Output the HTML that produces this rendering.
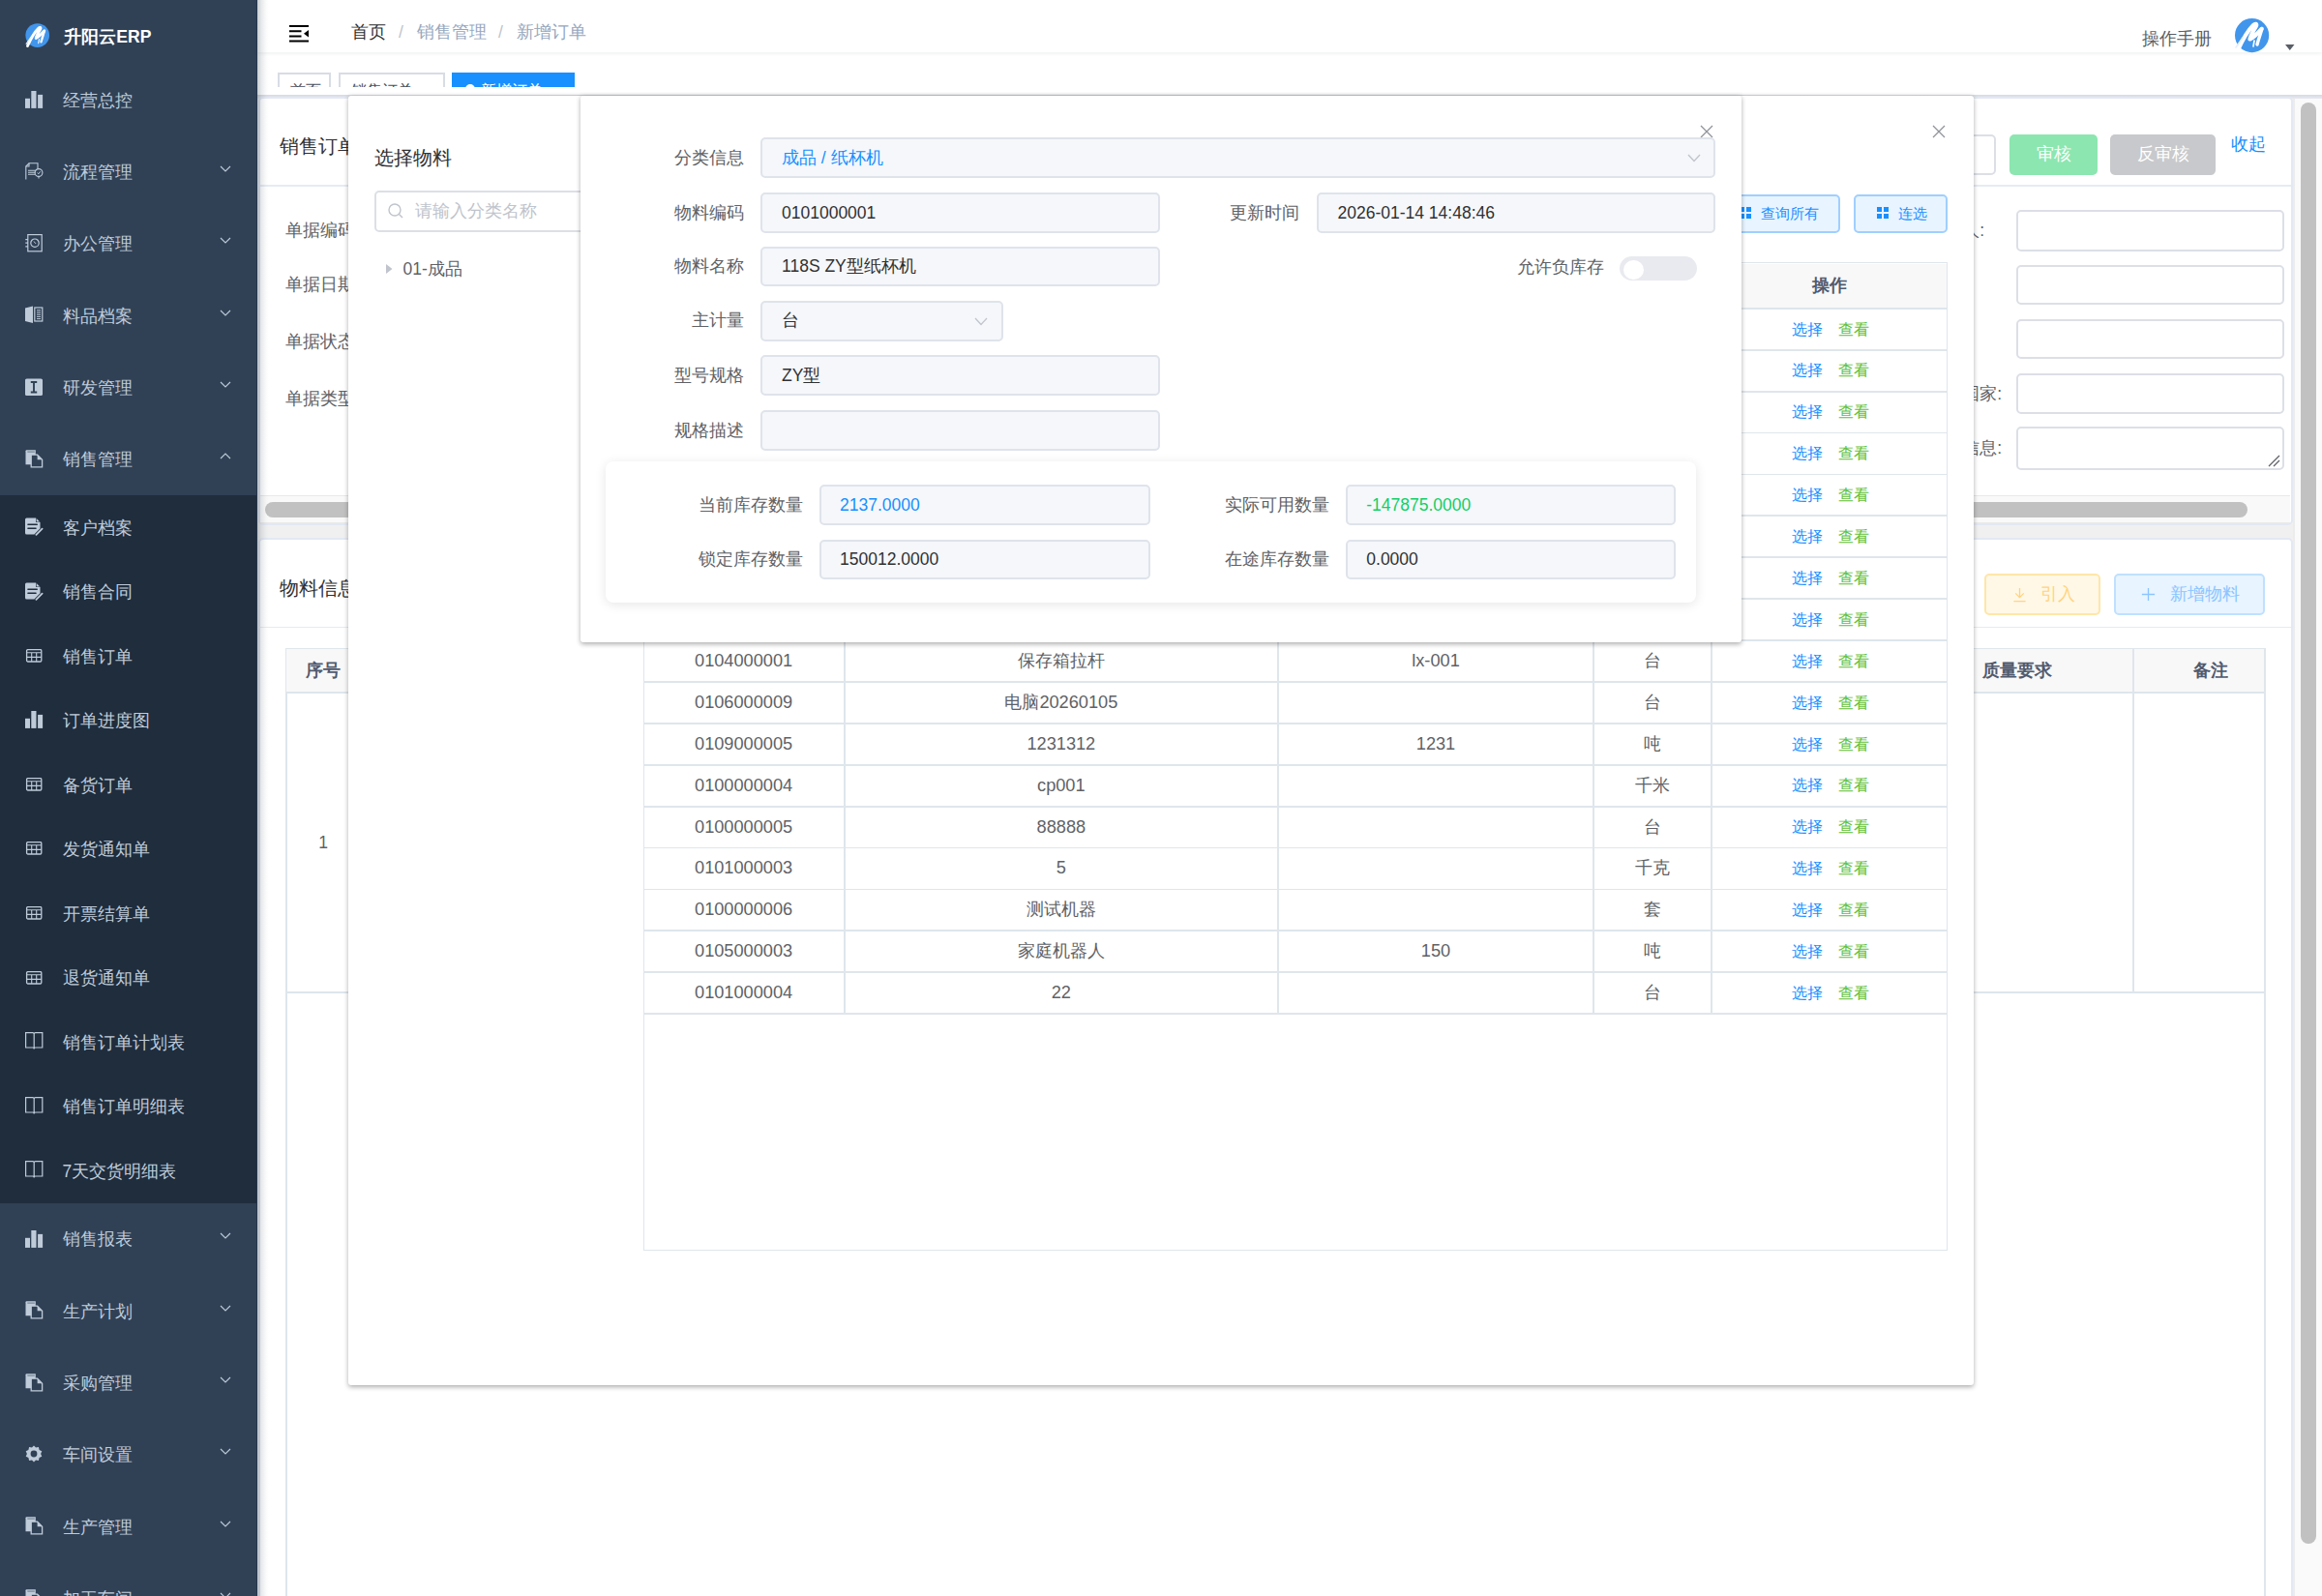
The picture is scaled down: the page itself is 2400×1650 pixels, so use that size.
<!DOCTYPE html>
<html><head><meta charset="utf-8"><style>
html,body{margin:0;padding:0;width:2400px;height:1650px;overflow:hidden;background:#fff;}
body{position:relative;font-family:"Liberation Sans",sans-serif;}
.r{position:absolute;}
.t{position:absolute;white-space:nowrap;}
</style></head><body>
<div class="r" style="left:0px;top:0px;width:266px;height:1650px;background:#304156;"></div>
<div class="r" style="left:0px;top:512px;width:266px;height:732px;background:#1f2d3d;"></div>
<svg class="r" style="left:24.5px;top:22.5px" width="28" height="28" viewBox="0 0 40 40"><circle cx="19.6" cy="19.4" r="17.6" fill="#4196ec"/><path d="M5 35 C9 26 14 16 21 9 C23 7 25 7.5 24 10 C21 15 18 20 17.5 23.5 C21 22 25 18 29.5 13" stroke="#fff" stroke-width="4.2" fill="none" stroke-linecap="round" stroke-linejoin="round"/><path d="M30 12.5 C28.5 18 26.5 23 25 29" stroke="#fff" stroke-width="3.4" fill="none" stroke-linecap="round"/><path d="M3 32 L10 22" stroke="#e3efff" stroke-width="1.6" stroke-linecap="round"/><path d="M22 25 L21 31" stroke="#fff" stroke-width="1.6" stroke-linecap="round"/></svg>
<div class="t" style="left:66.3px;top:25.98px;height:24.64px;line-height:24.64px;font-size:17.6px;color:#ffffff;font-weight:600;">升阳云ERP</div>
<svg class="r" style="left:25.9px;top:94.0px" width="19" height="19" viewBox="0 0 19 19" fill="#bfcbd9"><rect x="0" y="7.8" width="5" height="10.1"/><rect x="6.3" y="0" width="5.2" height="17.9"/><rect x="13.1" y="3.9" width="5" height="14"/></svg>
<div class="t" style="left:64.6px;top:91.8px;height:24.5px;line-height:24.5px;font-size:17.5px;color:#bfcbd9;font-weight:normal;">经营总控</div>
<svg class="r" style="left:26px;top:167.75px" width="19" height="19" viewBox="0 0 19 19" fill="#bfcbd9"><path d="M0.8 17.5 V4 L4 0.8 H13 V6.5" fill="none" stroke="#bfcbd9" stroke-width="1.1"/><path d="M4 0.8 V4 H0.8" fill="none" stroke="#bfcbd9" stroke-width="1.1"/><path d="M3 8.2 H10.5 M3 10.2 H10.5 M3 12.2 H10" stroke="#bfcbd9" stroke-width="1.1"/><circle cx="14" cy="10.5" r="3.9" fill="none" stroke="#bfcbd9" stroke-width="1.1"/><path d="M12.6 10.6 L13.8 11.8 L15.6 9.4" fill="none" stroke="#bfcbd9" stroke-width="1"/><path d="M14 14.4 V16.5" stroke="#bfcbd9" stroke-width="1.1"/></svg>
<div class="t" style="left:64.6px;top:166.1px;height:24.5px;line-height:24.5px;font-size:17.5px;color:#bfcbd9;font-weight:normal;">流程管理</div>
<svg class="r" style="left:227px;top:171.15px" width="12" height="8" viewBox="0 0 12 8"><path d="M1 1 L6 6 L11 1" fill="none" stroke="#bfcbd9" stroke-width="1.1"/></svg>
<svg class="r" style="left:26px;top:242.05px" width="19" height="19" viewBox="0 0 19 19" fill="#bfcbd9"><rect x="2.8" y="0.6" width="14.4" height="17.2" fill="none" stroke="#bfcbd9" stroke-width="1.2"/><circle cx="10" cy="9.2" r="4.2" fill="none" stroke="#bfcbd9" stroke-width="1.2"/><path d="M9 7.5 L10.6 9.6 H11.2" fill="none" stroke="#bfcbd9" stroke-width="1"/><path d="M0.3 5.6 H3 M0.3 9.2 H3 M0.3 12.8 H3" stroke="#bfcbd9" stroke-width="1.2"/></svg>
<div class="t" style="left:64.6px;top:240.4px;height:24.5px;line-height:24.5px;font-size:17.5px;color:#bfcbd9;font-weight:normal;">办公管理</div>
<svg class="r" style="left:227px;top:245.45px" width="12" height="8" viewBox="0 0 12 8"><path d="M1 1 L6 6 L11 1" fill="none" stroke="#bfcbd9" stroke-width="1.1"/></svg>
<svg class="r" style="left:26px;top:316.35px" width="19" height="19" viewBox="0 0 19 19" fill="#bfcbd9"><path d="M0 2.5 L8 0.5 V18 L0 16 Z"/><rect x="9.8" y="2" width="8" height="14" fill="none" stroke="#bfcbd9" stroke-width="1.2"/><path d="M12 4.8 H16 M12 7 H16 M12 9.2 H16 M12 11.4 H16 M12 13.6 H16" stroke="#bfcbd9" stroke-width="1"/></svg>
<div class="t" style="left:64.6px;top:314.7px;height:24.5px;line-height:24.5px;font-size:17.5px;color:#bfcbd9;font-weight:normal;">料品档案</div>
<svg class="r" style="left:227px;top:319.75px" width="12" height="8" viewBox="0 0 12 8"><path d="M1 1 L6 6 L11 1" fill="none" stroke="#bfcbd9" stroke-width="1.1"/></svg>
<svg class="r" style="left:26px;top:390.65px" width="19" height="19" viewBox="0 0 19 19" fill="#bfcbd9"><rect x="0" y="0.5" width="18" height="17.5" rx="1.6"/><path d="M5.8 4 H12.2 M9 4 V14.5 M5.8 14.5 H12.2" stroke="#304156" stroke-width="1.9"/></svg>
<div class="t" style="left:64.6px;top:389.0px;height:24.5px;line-height:24.5px;font-size:17.5px;color:#bfcbd9;font-weight:normal;">研发管理</div>
<svg class="r" style="left:227px;top:394.05px" width="12" height="8" viewBox="0 0 12 8"><path d="M1 1 L6 6 L11 1" fill="none" stroke="#bfcbd9" stroke-width="1.1"/></svg>
<svg class="r" style="left:26px;top:464.95px" width="19" height="19" viewBox="0 0 19 19" fill="#bfcbd9"><path d="M0.5 1.2 Q0.5 0.2 1.5 0.2 H10.8 V15.2 H0.5 Z"/><rect x="2.3" y="1.5" width="7.5" height="1.2" fill="#304156" opacity=".5"/><path d="M6.2 5.2 H12.6 L17.6 10.2 V17.8 H6.2 Z" fill="#304156" stroke="#bfcbd9" stroke-width="1.3"/><path d="M12.6 5.2 V10.2 H17.6 Z" fill="#bfcbd9"/></svg>
<div class="t" style="left:64.6px;top:463.3px;height:24.5px;line-height:24.5px;font-size:17.5px;color:#bfcbd9;font-weight:normal;">销售管理</div>
<svg class="r" style="left:227px;top:468.35px" width="12" height="8" viewBox="0 0 12 8"><path d="M1 6 L6 1 L11 6" fill="none" stroke="#bfcbd9" stroke-width="1.1"/></svg>
<svg class="r" style="left:26px;top:535.16px" width="19" height="19" viewBox="0 0 19 19" fill="#bfcbd9"><path d="M1.5 0.5 H11 L15.5 5 V11.5 L9.5 17.5 H1.5 Q0 17.5 0 16 V2 Q0 0.5 1.5 0.5 Z"/><path d="M11 0.5 V5 H15.5" fill="#1f2d3d"/><path d="M11.6 1 L15 4.4 H11.6 Z" fill="#bfcbd9"/><path d="M3 7.2 H12.2 M3 11.2 H11" stroke="#1f2d3d" stroke-width="1.6" stroke-linecap="round"/><path d="M10.8 18.6 L18 11.4" stroke="#1f2d3d" stroke-width="3.2"/><path d="M11.4 17.8 L17.6 11.6" stroke="#bfcbd9" stroke-width="1.8" stroke-linecap="round"/></svg>
<div class="t" style="left:64.6px;top:533.51px;height:24.5px;line-height:24.5px;font-size:17.5px;color:#bfcbd9;font-weight:normal;">客户档案</div>
<svg class="r" style="left:26px;top:601.68px" width="19" height="19" viewBox="0 0 19 19" fill="#bfcbd9"><path d="M1.5 0.5 H11 L15.5 5 V11.5 L9.5 17.5 H1.5 Q0 17.5 0 16 V2 Q0 0.5 1.5 0.5 Z"/><path d="M11 0.5 V5 H15.5" fill="#1f2d3d"/><path d="M11.6 1 L15 4.4 H11.6 Z" fill="#bfcbd9"/><path d="M3 7.2 H12.2 M3 11.2 H11" stroke="#1f2d3d" stroke-width="1.6" stroke-linecap="round"/><path d="M10.8 18.6 L18 11.4" stroke="#1f2d3d" stroke-width="3.2"/><path d="M11.4 17.8 L17.6 11.6" stroke="#bfcbd9" stroke-width="1.8" stroke-linecap="round"/></svg>
<div class="t" style="left:64.6px;top:600.03px;height:24.5px;line-height:24.5px;font-size:17.5px;color:#bfcbd9;font-weight:normal;">销售合同</div>
<svg class="r" style="left:26px;top:670.9px" width="19" height="19" viewBox="0 0 19 19" fill="#bfcbd9"><rect x="1.6" y="0.6" width="15.2" height="12.4" rx="1.2" fill="none" stroke="#bfcbd9" stroke-width="1.3"/><path d="M1.6 3.8 H16.8 M1.6 8.4 H16.8 M6.7 3.8 V13 M11.7 3.8 V13" stroke="#bfcbd9" stroke-width="1.1"/></svg>
<div class="t" style="left:64.6px;top:666.55px;height:24.5px;line-height:24.5px;font-size:17.5px;color:#bfcbd9;font-weight:normal;">销售订单</div>
<svg class="r" style="left:25.9px;top:735.27px" width="19" height="19" viewBox="0 0 19 19" fill="#bfcbd9"><rect x="0" y="7.8" width="5" height="10.1"/><rect x="6.3" y="0" width="5.2" height="17.9"/><rect x="13.1" y="3.9" width="5" height="14"/></svg>
<div class="t" style="left:64.6px;top:733.07px;height:24.5px;line-height:24.5px;font-size:17.5px;color:#bfcbd9;font-weight:normal;">订单进度图</div>
<svg class="r" style="left:26px;top:803.94px" width="19" height="19" viewBox="0 0 19 19" fill="#bfcbd9"><rect x="1.6" y="0.6" width="15.2" height="12.4" rx="1.2" fill="none" stroke="#bfcbd9" stroke-width="1.3"/><path d="M1.6 3.8 H16.8 M1.6 8.4 H16.8 M6.7 3.8 V13 M11.7 3.8 V13" stroke="#bfcbd9" stroke-width="1.1"/></svg>
<div class="t" style="left:64.6px;top:799.59px;height:24.5px;line-height:24.5px;font-size:17.5px;color:#bfcbd9;font-weight:normal;">备货订单</div>
<svg class="r" style="left:26px;top:870.46px" width="19" height="19" viewBox="0 0 19 19" fill="#bfcbd9"><rect x="1.6" y="0.6" width="15.2" height="12.4" rx="1.2" fill="none" stroke="#bfcbd9" stroke-width="1.3"/><path d="M1.6 3.8 H16.8 M1.6 8.4 H16.8 M6.7 3.8 V13 M11.7 3.8 V13" stroke="#bfcbd9" stroke-width="1.1"/></svg>
<div class="t" style="left:64.6px;top:866.11px;height:24.5px;line-height:24.5px;font-size:17.5px;color:#bfcbd9;font-weight:normal;">发货通知单</div>
<svg class="r" style="left:26px;top:936.98px" width="19" height="19" viewBox="0 0 19 19" fill="#bfcbd9"><rect x="1.6" y="0.6" width="15.2" height="12.4" rx="1.2" fill="none" stroke="#bfcbd9" stroke-width="1.3"/><path d="M1.6 3.8 H16.8 M1.6 8.4 H16.8 M6.7 3.8 V13 M11.7 3.8 V13" stroke="#bfcbd9" stroke-width="1.1"/></svg>
<div class="t" style="left:64.6px;top:932.63px;height:24.5px;line-height:24.5px;font-size:17.5px;color:#bfcbd9;font-weight:normal;">开票结算单</div>
<svg class="r" style="left:26px;top:1003.5px" width="19" height="19" viewBox="0 0 19 19" fill="#bfcbd9"><rect x="1.6" y="0.6" width="15.2" height="12.4" rx="1.2" fill="none" stroke="#bfcbd9" stroke-width="1.3"/><path d="M1.6 3.8 H16.8 M1.6 8.4 H16.8 M6.7 3.8 V13 M11.7 3.8 V13" stroke="#bfcbd9" stroke-width="1.1"/></svg>
<div class="t" style="left:64.6px;top:999.15px;height:24.5px;line-height:24.5px;font-size:17.5px;color:#bfcbd9;font-weight:normal;">退货通知单</div>
<svg class="r" style="left:26px;top:1067.32px" width="19" height="19" viewBox="0 0 19 19" fill="#bfcbd9"><path d="M0.6 0.6 H7.8 Q9.2 0.6 9.2 2 V17.4 Q9.2 16 7.8 16 H0.6 Z M17.8 0.6 H10.6 Q9.2 0.6 9.2 2 V17.4 Q9.2 16 10.6 16 H17.8 Z" fill="none" stroke="#bfcbd9" stroke-width="1.2"/></svg>
<div class="t" style="left:64.6px;top:1065.67px;height:24.5px;line-height:24.5px;font-size:17.5px;color:#bfcbd9;font-weight:normal;">销售订单计划表</div>
<svg class="r" style="left:26px;top:1133.84px" width="19" height="19" viewBox="0 0 19 19" fill="#bfcbd9"><path d="M0.6 0.6 H7.8 Q9.2 0.6 9.2 2 V17.4 Q9.2 16 7.8 16 H0.6 Z M17.8 0.6 H10.6 Q9.2 0.6 9.2 2 V17.4 Q9.2 16 10.6 16 H17.8 Z" fill="none" stroke="#bfcbd9" stroke-width="1.2"/></svg>
<div class="t" style="left:64.6px;top:1132.19px;height:24.5px;line-height:24.5px;font-size:17.5px;color:#bfcbd9;font-weight:normal;">销售订单明细表</div>
<svg class="r" style="left:26px;top:1200.36px" width="19" height="19" viewBox="0 0 19 19" fill="#bfcbd9"><path d="M0.6 0.6 H7.8 Q9.2 0.6 9.2 2 V17.4 Q9.2 16 7.8 16 H0.6 Z M17.8 0.6 H10.6 Q9.2 0.6 9.2 2 V17.4 Q9.2 16 10.6 16 H17.8 Z" fill="none" stroke="#bfcbd9" stroke-width="1.2"/></svg>
<div class="t" style="left:64.6px;top:1198.71px;height:24.5px;line-height:24.5px;font-size:17.5px;color:#bfcbd9;font-weight:normal;">7天交货明细表</div>
<svg class="r" style="left:25.9px;top:1271.6px" width="19" height="19" viewBox="0 0 19 19" fill="#bfcbd9"><rect x="0" y="7.8" width="5" height="10.1"/><rect x="6.3" y="0" width="5.2" height="17.9"/><rect x="13.1" y="3.9" width="5" height="14"/></svg>
<div class="t" style="left:64.6px;top:1269.4px;height:24.5px;line-height:24.5px;font-size:17.5px;color:#bfcbd9;font-weight:normal;">销售报表</div>
<svg class="r" style="left:227px;top:1274.45px" width="12" height="8" viewBox="0 0 12 8"><path d="M1 1 L6 6 L11 1" fill="none" stroke="#bfcbd9" stroke-width="1.1"/></svg>
<svg class="r" style="left:26px;top:1345.35px" width="19" height="19" viewBox="0 0 19 19" fill="#bfcbd9"><path d="M0.5 1.2 Q0.5 0.2 1.5 0.2 H10.8 V15.2 H0.5 Z"/><rect x="2.3" y="1.5" width="7.5" height="1.2" fill="#304156" opacity=".5"/><path d="M6.2 5.2 H12.6 L17.6 10.2 V17.8 H6.2 Z" fill="#304156" stroke="#bfcbd9" stroke-width="1.3"/><path d="M12.6 5.2 V10.2 H17.6 Z" fill="#bfcbd9"/></svg>
<div class="t" style="left:64.6px;top:1343.7px;height:24.5px;line-height:24.5px;font-size:17.5px;color:#bfcbd9;font-weight:normal;">生产计划</div>
<svg class="r" style="left:227px;top:1348.75px" width="12" height="8" viewBox="0 0 12 8"><path d="M1 1 L6 6 L11 1" fill="none" stroke="#bfcbd9" stroke-width="1.1"/></svg>
<svg class="r" style="left:26px;top:1419.65px" width="19" height="19" viewBox="0 0 19 19" fill="#bfcbd9"><path d="M0.5 1.2 Q0.5 0.2 1.5 0.2 H10.8 V15.2 H0.5 Z"/><rect x="2.3" y="1.5" width="7.5" height="1.2" fill="#304156" opacity=".5"/><path d="M6.2 5.2 H12.6 L17.6 10.2 V17.8 H6.2 Z" fill="#304156" stroke="#bfcbd9" stroke-width="1.3"/><path d="M12.6 5.2 V10.2 H17.6 Z" fill="#bfcbd9"/></svg>
<div class="t" style="left:64.6px;top:1418.0px;height:24.5px;line-height:24.5px;font-size:17.5px;color:#bfcbd9;font-weight:normal;">采购管理</div>
<svg class="r" style="left:227px;top:1423.05px" width="12" height="8" viewBox="0 0 12 8"><path d="M1 1 L6 6 L11 1" fill="none" stroke="#bfcbd9" stroke-width="1.1"/></svg>
<svg class="r" style="left:26px;top:1493.95px" width="19" height="19" viewBox="0 0 19 19" fill="#bfcbd9"><path d="M9 0.5 L11 2.6 L13.9 2 L14.6 4.9 L17.3 6.2 L16.1 9 L17.3 11.8 L14.6 13.1 L13.9 16 L11 15.4 L9 17.5 L7 15.4 L4.1 16 L3.4 13.1 L0.7 11.8 L1.9 9 L0.7 6.2 L3.4 4.9 L4.1 2 L7 2.6 Z"/><circle cx="9" cy="9" r="3.4" fill="#304156"/></svg>
<div class="t" style="left:64.6px;top:1492.3px;height:24.5px;line-height:24.5px;font-size:17.5px;color:#bfcbd9;font-weight:normal;">车间设置</div>
<svg class="r" style="left:227px;top:1497.35px" width="12" height="8" viewBox="0 0 12 8"><path d="M1 1 L6 6 L11 1" fill="none" stroke="#bfcbd9" stroke-width="1.1"/></svg>
<svg class="r" style="left:26px;top:1568.25px" width="19" height="19" viewBox="0 0 19 19" fill="#bfcbd9"><path d="M0.5 1.2 Q0.5 0.2 1.5 0.2 H10.8 V15.2 H0.5 Z"/><rect x="2.3" y="1.5" width="7.5" height="1.2" fill="#304156" opacity=".5"/><path d="M6.2 5.2 H12.6 L17.6 10.2 V17.8 H6.2 Z" fill="#304156" stroke="#bfcbd9" stroke-width="1.3"/><path d="M12.6 5.2 V10.2 H17.6 Z" fill="#bfcbd9"/></svg>
<div class="t" style="left:64.6px;top:1566.6px;height:24.5px;line-height:24.5px;font-size:17.5px;color:#bfcbd9;font-weight:normal;">生产管理</div>
<svg class="r" style="left:227px;top:1571.65px" width="12" height="8" viewBox="0 0 12 8"><path d="M1 1 L6 6 L11 1" fill="none" stroke="#bfcbd9" stroke-width="1.1"/></svg>
<svg class="r" style="left:26px;top:1642.55px" width="19" height="19" viewBox="0 0 19 19" fill="#bfcbd9"><path d="M0.5 1.2 Q0.5 0.2 1.5 0.2 H10.8 V15.2 H0.5 Z"/><rect x="2.3" y="1.5" width="7.5" height="1.2" fill="#304156" opacity=".5"/><path d="M6.2 5.2 H12.6 L17.6 10.2 V17.8 H6.2 Z" fill="#304156" stroke="#bfcbd9" stroke-width="1.3"/><path d="M12.6 5.2 V10.2 H17.6 Z" fill="#bfcbd9"/></svg>
<div class="t" style="left:64.6px;top:1640.9px;height:24.5px;line-height:24.5px;font-size:17.5px;color:#bfcbd9;font-weight:normal;">加工车间</div>
<svg class="r" style="left:227px;top:1645.95px" width="12" height="8" viewBox="0 0 12 8"><path d="M1 1 L6 6 L11 1" fill="none" stroke="#bfcbd9" stroke-width="1.1"/></svg>
<div class="r" style="left:266px;top:54px;width:2134px;height:1596px;background:#f0f0f0;"></div>
<div class="r" style="left:266px;top:54px;width:2134px;height:44px;background:#fff;"></div>
<div class="r" style="left:266px;top:54px;width:2134px;height:36px;overflow:hidden">
<div class="r" style="left:21px;top:21px;width:55px;height:34px;border:2px solid #d8dce5;box-sizing:border-box;background:#fff"></div>
<div class="t" style="left:33.5px;top:23px;height:34px;line-height:34px;font-size:16px;color:#495060">首页</div>
<div class="r" style="left:84px;top:21px;width:110px;height:34px;border:2px solid #d8dce5;box-sizing:border-box;background:#fff"></div>
<div class="t" style="left:96.5px;top:23px;height:34px;line-height:34px;font-size:16px;color:#495060">销售订单</div>
<div class="r" style="left:201px;top:21px;width:127px;height:34px;background:#1890ff;"></div>
<div class="r" style="left:215px;top:33px;width:10px;height:10px;border-radius:5px;background:#fff"></div>
<div class="t" style="left:231px;top:23px;height:34px;line-height:34px;font-size:16px;color:#fff">新增订单</div>
</div>
<div class="r" style="left:266px;top:98px;width:2134px;height:3.8px;background:linear-gradient(#d6dae3,#e6e9f0);"></div>
<div class="r" style="left:266px;top:0px;width:2134px;height:54px;background:#fff;box-shadow:0 1px 4px rgba(0,21,41,.08);"></div>
<svg class="r" style="left:298px;top:25px" width="22" height="20" viewBox="0 0 22 20"><path d="M1 2 H21 M1 7.2 H13.5 M1 12.4 H13.5 M1 17.5 H21" stroke="#000" stroke-width="2"/><path d="M21 6 L16 9.8 L21 13.6 Z" fill="#000"/></svg>
<div class="t" style="left:363px;top:20.85px;height:24.5px;line-height:24.5px;font-size:17.5px;color:#303133;font-weight:normal;">首页</div>
<div class="t" style="left:412px;top:20.85px;height:24.5px;line-height:24.5px;font-size:17.5px;color:#c0c4cc;font-weight:normal;">/</div>
<div class="t" style="left:431px;top:20.85px;height:24.5px;line-height:24.5px;font-size:17.5px;color:#97a8be;font-weight:normal;">销售管理</div>
<div class="t" style="left:515px;top:20.85px;height:24.5px;line-height:24.5px;font-size:17.5px;color:#c0c4cc;font-weight:normal;">/</div>
<div class="t" style="left:534px;top:20.85px;height:24.5px;line-height:24.5px;font-size:17.5px;color:#97a8be;font-weight:normal;">新增订单</div>
<div class="t" style="left:2214px;top:28.05px;height:24.5px;line-height:24.5px;font-size:17.5px;color:#5a5e66;font-weight:normal;">操作手册</div>
<svg class="r" style="left:2308px;top:16.8px" width="40" height="40" viewBox="0 0 40 40"><circle cx="19.6" cy="19.6" r="17.6" fill="#4196ec"/><path d="M5 35 C9 26 14 16 21 9 C23 7 25 7.5 24 10 C21 15 18 20 17.5 23.5 C21 22 25 18 29.5 13" stroke="#fff" stroke-width="4.2" fill="none" stroke-linecap="round" stroke-linejoin="round"/><path d="M30 12.5 C28.5 18 26.5 23 25 29" stroke="#fff" stroke-width="3.4" fill="none" stroke-linecap="round"/><path d="M3 32 L10 22" stroke="#e3efff" stroke-width="1.6" stroke-linecap="round"/><path d="M22 25 L21 31" stroke="#fff" stroke-width="1.6" stroke-linecap="round"/></svg>
<svg class="r" style="left:2362px;top:46px" width="10" height="7" viewBox="0 0 10 7"><path d="M0 0 H9.5 L4.75 6 Z" fill="#5a5e66"/></svg>
<div class="r" style="left:267px;top:100px;width:2102.8px;height:442.6px;background:#fff;border:2px solid #e3e8f3;border-radius:5px;box-sizing:border-box;"></div>
<div class="t" style="left:289px;top:136.7px;height:28.0px;line-height:28.0px;font-size:20px;color:#303133;font-weight:normal;">销售订单</div>
<div class="r" style="left:268px;top:191px;width:2100px;height:1.5px;background:#e6ebf5;"></div>
<div class="t" style="left:294.5px;top:225.65px;height:24.5px;line-height:24.5px;font-size:17.5px;color:#606266;font-weight:normal;">单据编码</div>
<div class="t" style="left:294.5px;top:282.35px;height:24.5px;line-height:24.5px;font-size:17.5px;color:#606266;font-weight:normal;">单据日期</div>
<div class="t" style="left:294.5px;top:341.45px;height:24.5px;line-height:24.5px;font-size:17.5px;color:#606266;font-weight:normal;">单据状态</div>
<div class="t" style="left:294.5px;top:399.65px;height:24.5px;line-height:24.5px;font-size:17.5px;color:#606266;font-weight:normal;">单据类型</div>
<div class="r" style="left:1980px;top:139px;width:83px;height:41.5px;background:#fff;border:2px solid #dcdfe6;border-radius:5px;box-sizing:border-box;"></div>
<div class="r" style="left:2077px;top:139px;width:91px;height:41.5px;background:#8ce6b0;border-radius:5px;"></div>
<div class="t" style="left:2077.5px;width:90px;text-align:center;top:146.95px;height:24.5px;line-height:24.5px;font-size:17.5px;color:#fff;font-weight:normal;">审核</div>
<div class="r" style="left:2181px;top:139px;width:109px;height:41.5px;background:#c8c9cc;border-radius:5px;"></div>
<div class="t" style="left:2181.5px;width:108px;text-align:center;top:147.05px;height:24.5px;line-height:24.5px;font-size:17.5px;color:#fff;font-weight:normal;">反审核</div>
<div class="t" style="left:2305.5px;top:137.25px;height:24.5px;line-height:24.5px;font-size:17.5px;color:#1890ff;font-weight:normal;">收起</div>
<div class="r" style="left:2083.5px;top:216.5px;width:277.9px;height:43.0px;background:#fff;border:2px solid #dcdfe6;border-radius:5px;box-sizing:border-box;"></div>
<div class="r" style="left:2083.5px;top:273.7px;width:277.9px;height:41.6px;background:#fff;border:2px solid #dcdfe6;border-radius:5px;box-sizing:border-box;"></div>
<div class="r" style="left:2083.5px;top:329.5px;width:277.9px;height:41.5px;background:#fff;border:2px solid #dcdfe6;border-radius:5px;box-sizing:border-box;"></div>
<div class="r" style="left:2083.5px;top:385.6px;width:277.9px;height:42.4px;background:#fff;border:2px solid #dcdfe6;border-radius:5px;box-sizing:border-box;"></div>
<div class="r" style="left:2083.5px;top:441.4px;width:277.9px;height:44.8px;background:#fff;border:2px solid #dcdfe6;border-radius:5px;box-sizing:border-box;"></div>
<svg class="r" style="left:2343px;top:469px" width="14" height="14" viewBox="0 0 14 14"><path d="M2 13 L13 2 M7 13 L13 7" stroke="#606266" stroke-width="1.3"/></svg>
<div class="t" style="left:1651px;width:400px;text-align:right;top:225.75px;height:24.5px;line-height:24.5px;font-size:17.5px;color:#606266;font-weight:normal;">人:</div>
<div class="t" style="left:1669px;width:400px;text-align:right;top:394.75px;height:24.5px;line-height:24.5px;font-size:17.5px;color:#606266;font-weight:normal;">国家:</div>
<div class="t" style="left:1669px;width:400px;text-align:right;top:450.75px;height:24.5px;line-height:24.5px;font-size:17.5px;color:#606266;font-weight:normal;">信息:</div>
<div class="r" style="left:269px;top:512px;width:2098px;height:28.8px;background:#f9f9f9;border-top:1.6px solid #e8e8e8;border-bottom:1.8px solid #e9e9e9;box-sizing:border-box;"></div>
<div class="r" style="left:274px;top:519px;width:2049px;height:16px;background:#c1c1c1;border-radius:8px;"></div>
<div class="r" style="left:267px;top:555.5px;width:2102.8px;height:1144.5px;background:#fff;border:2px solid #e3e8f3;border-radius:5px;box-sizing:border-box;"></div>
<div class="t" style="left:289px;top:594.2px;height:28.0px;line-height:28.0px;font-size:20px;color:#303133;font-weight:normal;">物料信息</div>
<div class="r" style="left:268px;top:647.5px;width:2100px;height:1.5px;background:#e6ebf5;"></div>
<div class="r" style="left:2051.3px;top:592.6px;width:120.1px;height:43.9px;background:#fff8e6;border:2px solid #ffe6a8;border-radius:5px;box-sizing:border-box;"></div>
<svg class="r" style="left:2080px;top:607px" width="15" height="16" viewBox="0 0 16 17"><path d="M8 1 V11 M3.5 6.8 L8 11.3 L12.5 6.8 M1.5 15.5 H14.5" fill="none" stroke="#ffd480" stroke-width="1.4"/></svg>
<div class="t" style="left:2109px;top:602.25px;height:24.5px;line-height:24.5px;font-size:17.5px;color:#ffd480;font-weight:normal;">引入</div>
<div class="r" style="left:2185.2px;top:592.6px;width:156.3px;height:43.9px;background:#e8f4ff;border:2px solid #bfe0ff;border-radius:5px;box-sizing:border-box;"></div>
<svg class="r" style="left:2213px;top:607px" width="15" height="15" viewBox="0 0 17 17"><path d="M8.5 1 V16 M1 8.5 H16" fill="none" stroke="#8cc5ff" stroke-width="1.5"/></svg>
<div class="t" style="left:2243px;top:602.25px;height:24.5px;line-height:24.5px;font-size:17.5px;color:#8cc5ff;font-weight:normal;">新增物料</div>
<div class="r" style="left:295px;top:669.5px;width:2046.5px;height:1030.5px;border:2px solid #dfe6ec;box-sizing:border-box;"></div>
<div class="r" style="left:296px;top:671px;width:2044px;height:45px;background:#f8f8f9;"></div>
<div class="r" style="left:296px;top:714.5px;width:2044px;height:2.0px;background:#dfe6ec;"></div>
<div class="r" style="left:296px;top:1025px;width:2044px;height:2px;background:#dfe6ec;"></div>
<div class="r" style="left:373px;top:671px;width:2px;height:355px;background:#dfe6ec;"></div>
<div class="r" style="left:2204.3px;top:671px;width:2.0px;height:355px;background:#dfe6ec;"></div>
<div class="r" style="left:1965px;top:671px;width:2px;height:355px;background:#dfe6ec;"></div>
<div class="t" style="left:294.0px;width:80px;text-align:center;top:680.75px;height:24.5px;line-height:24.5px;font-size:17.5px;color:#515a6e;font-weight:700;">序号</div>
<div class="t" style="left:1985.0px;width:200px;text-align:center;top:680.75px;height:24.5px;line-height:24.5px;font-size:17.5px;color:#515a6e;font-weight:700;">质量要求</div>
<div class="t" style="left:2235.0px;width:100px;text-align:center;top:680.75px;height:24.5px;line-height:24.5px;font-size:17.5px;color:#515a6e;font-weight:700;">备注</div>
<div class="t" style="left:294.0px;width:80px;text-align:center;top:858.75px;height:24.5px;line-height:24.5px;font-size:17.5px;color:#606266;font-weight:normal;">1</div>
<div class="r" style="left:2369.8px;top:101.8px;width:30.2px;height:1548.2px;background:#fafafa;border-left:2px solid #ececec;box-sizing:border-box;"></div>
<div class="r" style="left:2378.2px;top:106px;width:15.6px;height:1490px;background:#c1c1c1;border-radius:8px;"></div>
<div class="r" style="left:265px;top:0px;width:1px;height:1650px;background:#26374d;"></div>
<div class="r" style="left:266px;top:0px;width:12px;height:1650px;background:linear-gradient(to right, rgba(0,21,41,.21), rgba(0,21,41,.09) 35%, rgba(0,21,41,.02) 75%, rgba(0,21,41,0));"></div>
<div class="r" style="left:359.5px;top:98.5px;width:1680.5px;height:1333.5px;background:#fff;box-shadow:0 1.5px 5px rgba(0,0,0,.32);border-radius:3px;">
<div class="t" style="left:27.1px;top:50.5px;height:28.0px;line-height:28.0px;font-size:20px;color:#303133;font-weight:normal;">选择物料</div>
<svg class="r" style="left:1637.5px;top:30.5px" width="14" height="14" viewBox="0 0 14 14"><path d="M1 1 L13 13 M13 1 L1 13" stroke="#909399" stroke-width="1.3"/></svg>
<div class="r" style="left:27.1px;top:98.0px;width:253.4px;height:43.1px;background:#fff;border:2px solid #dcdfe6;border-radius:5px;box-sizing:border-box;"></div>
<svg class="r" style="left:40.5px;top:110.5px" width="18" height="18" viewBox="0 0 18 18"><circle cx="8" cy="8" r="6" fill="none" stroke="#c0c4cc" stroke-width="1.4"/><path d="M12.5 12.5 L16 16" stroke="#c0c4cc" stroke-width="1.4"/></svg>
<div class="t" style="left:69.5px;top:107.25px;height:24.5px;line-height:24.5px;font-size:17.5px;color:#c0c4cc;font-weight:normal;">请输入分类名称</div>
<svg class="r" style="left:39.5px;top:174.5px" width="7" height="10" viewBox="0 0 7 10"><path d="M0 0 L6.5 5 L0 10 Z" fill="#c0c4cc"/></svg>
<div class="t" style="left:57.1px;top:167.25px;height:24.5px;line-height:24.5px;font-size:17.5px;color:#606266;font-weight:normal;">01-成品</div>
<div class="r" style="left:1420.5px;top:102.8px;width:122.4px;height:39.3px;background:#e8f4ff;border:2px solid #a0cfff;border-radius:5px;box-sizing:border-box;"></div>
<svg class="r" style="left:1438.5px;top:115.9px" width="12" height="12" viewBox="0 0 12 12" fill="#1890ff"><rect x="0" y="0" width="5" height="5"/><rect x="7" y="0" width="5" height="5"/><rect x="0" y="7" width="5" height="5"/><rect x="7" y="7" width="5" height="5"/></svg>
<div class="t" style="left:1460.5px;top:111.86px;height:21.28px;line-height:21.28px;font-size:15.2px;color:#1890ff;font-weight:normal;">查询所有</div>
<div class="r" style="left:1556.9px;top:102.8px;width:97.1px;height:39.3px;background:#e8f4ff;border:2px solid #a0cfff;border-radius:5px;box-sizing:border-box;"></div>
<svg class="r" style="left:1580.5px;top:115.9px" width="12" height="12" viewBox="0 0 12 12" fill="#1890ff"><rect x="0" y="0" width="5" height="5"/><rect x="7" y="0" width="5" height="5"/><rect x="0" y="7" width="5" height="5"/><rect x="7" y="7" width="5" height="5"/></svg>
<div class="t" style="left:1602.5px;top:111.86px;height:21.28px;line-height:21.28px;font-size:15.2px;color:#1890ff;font-weight:normal;">连选</div>
<div class="r" style="left:305.0px;top:172.9px;width:1348.5px;height:1022.1px;border:1.9px solid #dfe6ec;box-sizing:border-box;"></div>
<div class="r" style="left:306.0px;top:174.0px;width:1346.5px;height:45.4px;background:#f8f8f9;"></div>
<div class="r" style="left:306.0px;top:219.4px;width:1346.5px;height:1.9px;background:#dfe6ec;"></div>
<div class="r" style="left:512.3px;top:174.0px;width:1.8px;height:775.7px;background:#dfe6ec;"></div>
<div class="r" style="left:960.6px;top:174.0px;width:1.8px;height:775.7px;background:#dfe6ec;"></div>
<div class="r" style="left:1286.6px;top:174.0px;width:1.8px;height:775.7px;background:#dfe6ec;"></div>
<div class="r" style="left:1408.3px;top:174.0px;width:1.8px;height:775.7px;background:#dfe6ec;"></div>
<div class="r" style="left:306.0px;top:262.3px;width:1346.5px;height:1.9px;background:#dfe6ec;"></div>
<div class="t" style="left:305.0px;width:208.20000000000005px;text-align:center;top:229.26px;height:25.48px;line-height:25.48px;font-size:18.2px;color:#606266;font-weight:normal;">0101000001</div>
<div class="t" style="left:513.2px;width:448.29999999999995px;text-align:center;top:229.26px;height:25.48px;line-height:25.48px;font-size:18.2px;color:#606266;font-weight:normal;">118S ZY型纸杯机</div>
<div class="t" style="left:961.5px;width:326px;text-align:center;top:229.26px;height:25.48px;line-height:25.48px;font-size:18.2px;color:#606266;font-weight:normal;">ZY型</div>
<div class="t" style="left:1287.5px;width:121.70000000000005px;text-align:center;top:229.26px;height:25.48px;line-height:25.48px;font-size:18.2px;color:#606266;font-weight:normal;">台</div>
<div class="t" style="left:1492.5px;top:231.08px;height:21.84px;line-height:21.84px;font-size:15.6px;color:#1890ff;font-weight:normal;">选择</div>
<div class="t" style="left:1540.0px;top:231.08px;height:21.84px;line-height:21.84px;font-size:15.6px;color:#67c23a;font-weight:normal;">查看</div>
<div class="r" style="left:306.0px;top:305.2px;width:1346.5px;height:1.9px;background:#dfe6ec;"></div>
<div class="t" style="left:305.0px;width:208.20000000000005px;text-align:center;top:272.16px;height:25.48px;line-height:25.48px;font-size:18.2px;color:#606266;font-weight:normal;">0101000002</div>
<div class="t" style="left:1492.5px;top:273.98px;height:21.84px;line-height:21.84px;font-size:15.6px;color:#1890ff;font-weight:normal;">选择</div>
<div class="t" style="left:1540.0px;top:273.98px;height:21.84px;line-height:21.84px;font-size:15.6px;color:#67c23a;font-weight:normal;">查看</div>
<div class="r" style="left:306.0px;top:348.1px;width:1346.5px;height:1.9px;background:#dfe6ec;"></div>
<div class="t" style="left:305.0px;width:208.20000000000005px;text-align:center;top:315.06px;height:25.48px;line-height:25.48px;font-size:18.2px;color:#606266;font-weight:normal;">0101000003</div>
<div class="t" style="left:1492.5px;top:316.88px;height:21.84px;line-height:21.84px;font-size:15.6px;color:#1890ff;font-weight:normal;">选择</div>
<div class="t" style="left:1540.0px;top:316.88px;height:21.84px;line-height:21.84px;font-size:15.6px;color:#67c23a;font-weight:normal;">查看</div>
<div class="r" style="left:306.0px;top:391.0px;width:1346.5px;height:1.9px;background:#dfe6ec;"></div>
<div class="t" style="left:1492.5px;top:359.78px;height:21.84px;line-height:21.84px;font-size:15.6px;color:#1890ff;font-weight:normal;">选择</div>
<div class="t" style="left:1540.0px;top:359.78px;height:21.84px;line-height:21.84px;font-size:15.6px;color:#67c23a;font-weight:normal;">查看</div>
<div class="r" style="left:306.0px;top:433.9px;width:1346.5px;height:1.9px;background:#dfe6ec;"></div>
<div class="t" style="left:1492.5px;top:402.68px;height:21.84px;line-height:21.84px;font-size:15.6px;color:#1890ff;font-weight:normal;">选择</div>
<div class="t" style="left:1540.0px;top:402.68px;height:21.84px;line-height:21.84px;font-size:15.6px;color:#67c23a;font-weight:normal;">查看</div>
<div class="r" style="left:306.0px;top:476.8px;width:1346.5px;height:1.9px;background:#dfe6ec;"></div>
<div class="t" style="left:1492.5px;top:445.58px;height:21.84px;line-height:21.84px;font-size:15.6px;color:#1890ff;font-weight:normal;">选择</div>
<div class="t" style="left:1540.0px;top:445.58px;height:21.84px;line-height:21.84px;font-size:15.6px;color:#67c23a;font-weight:normal;">查看</div>
<div class="r" style="left:306.0px;top:519.7px;width:1346.5px;height:1.9px;background:#dfe6ec;"></div>
<div class="t" style="left:1492.5px;top:488.48px;height:21.84px;line-height:21.84px;font-size:15.6px;color:#1890ff;font-weight:normal;">选择</div>
<div class="t" style="left:1540.0px;top:488.48px;height:21.84px;line-height:21.84px;font-size:15.6px;color:#67c23a;font-weight:normal;">查看</div>
<div class="r" style="left:306.0px;top:562.6px;width:1346.5px;height:1.9px;background:#dfe6ec;"></div>
<div class="t" style="left:1492.5px;top:531.38px;height:21.84px;line-height:21.84px;font-size:15.6px;color:#1890ff;font-weight:normal;">选择</div>
<div class="t" style="left:1540.0px;top:531.38px;height:21.84px;line-height:21.84px;font-size:15.6px;color:#67c23a;font-weight:normal;">查看</div>
<div class="r" style="left:306.0px;top:605.5px;width:1346.5px;height:1.9px;background:#dfe6ec;"></div>
<div class="t" style="left:305.0px;width:208.20000000000005px;text-align:center;top:572.46px;height:25.48px;line-height:25.48px;font-size:18.2px;color:#606266;font-weight:normal;">0104000001</div>
<div class="t" style="left:513.2px;width:448.29999999999995px;text-align:center;top:572.46px;height:25.48px;line-height:25.48px;font-size:18.2px;color:#606266;font-weight:normal;">保存箱拉杆</div>
<div class="t" style="left:961.5px;width:326px;text-align:center;top:572.46px;height:25.48px;line-height:25.48px;font-size:18.2px;color:#606266;font-weight:normal;">lx-001</div>
<div class="t" style="left:1287.5px;width:121.70000000000005px;text-align:center;top:572.46px;height:25.48px;line-height:25.48px;font-size:18.2px;color:#606266;font-weight:normal;">台</div>
<div class="t" style="left:1492.5px;top:574.28px;height:21.84px;line-height:21.84px;font-size:15.6px;color:#1890ff;font-weight:normal;">选择</div>
<div class="t" style="left:1540.0px;top:574.28px;height:21.84px;line-height:21.84px;font-size:15.6px;color:#67c23a;font-weight:normal;">查看</div>
<div class="r" style="left:306.0px;top:648.4px;width:1346.5px;height:1.9px;background:#dfe6ec;"></div>
<div class="t" style="left:305.0px;width:208.20000000000005px;text-align:center;top:615.36px;height:25.48px;line-height:25.48px;font-size:18.2px;color:#606266;font-weight:normal;">0106000009</div>
<div class="t" style="left:513.2px;width:448.29999999999995px;text-align:center;top:615.36px;height:25.48px;line-height:25.48px;font-size:18.2px;color:#606266;font-weight:normal;">电脑20260105</div>
<div class="t" style="left:1287.5px;width:121.70000000000005px;text-align:center;top:615.36px;height:25.48px;line-height:25.48px;font-size:18.2px;color:#606266;font-weight:normal;">台</div>
<div class="t" style="left:1492.5px;top:617.18px;height:21.84px;line-height:21.84px;font-size:15.6px;color:#1890ff;font-weight:normal;">选择</div>
<div class="t" style="left:1540.0px;top:617.18px;height:21.84px;line-height:21.84px;font-size:15.6px;color:#67c23a;font-weight:normal;">查看</div>
<div class="r" style="left:306.0px;top:691.3px;width:1346.5px;height:1.9px;background:#dfe6ec;"></div>
<div class="t" style="left:305.0px;width:208.20000000000005px;text-align:center;top:658.26px;height:25.48px;line-height:25.48px;font-size:18.2px;color:#606266;font-weight:normal;">0109000005</div>
<div class="t" style="left:513.2px;width:448.29999999999995px;text-align:center;top:658.26px;height:25.48px;line-height:25.48px;font-size:18.2px;color:#606266;font-weight:normal;">1231312</div>
<div class="t" style="left:961.5px;width:326px;text-align:center;top:658.26px;height:25.48px;line-height:25.48px;font-size:18.2px;color:#606266;font-weight:normal;">1231</div>
<div class="t" style="left:1287.5px;width:121.70000000000005px;text-align:center;top:658.26px;height:25.48px;line-height:25.48px;font-size:18.2px;color:#606266;font-weight:normal;">吨</div>
<div class="t" style="left:1492.5px;top:660.08px;height:21.84px;line-height:21.84px;font-size:15.6px;color:#1890ff;font-weight:normal;">选择</div>
<div class="t" style="left:1540.0px;top:660.08px;height:21.84px;line-height:21.84px;font-size:15.6px;color:#67c23a;font-weight:normal;">查看</div>
<div class="r" style="left:306.0px;top:734.2px;width:1346.5px;height:1.9px;background:#dfe6ec;"></div>
<div class="t" style="left:305.0px;width:208.20000000000005px;text-align:center;top:701.16px;height:25.48px;line-height:25.48px;font-size:18.2px;color:#606266;font-weight:normal;">0100000004</div>
<div class="t" style="left:513.2px;width:448.29999999999995px;text-align:center;top:701.16px;height:25.48px;line-height:25.48px;font-size:18.2px;color:#606266;font-weight:normal;">cp001</div>
<div class="t" style="left:1287.5px;width:121.70000000000005px;text-align:center;top:701.16px;height:25.48px;line-height:25.48px;font-size:18.2px;color:#606266;font-weight:normal;">千米</div>
<div class="t" style="left:1492.5px;top:702.98px;height:21.84px;line-height:21.84px;font-size:15.6px;color:#1890ff;font-weight:normal;">选择</div>
<div class="t" style="left:1540.0px;top:702.98px;height:21.84px;line-height:21.84px;font-size:15.6px;color:#67c23a;font-weight:normal;">查看</div>
<div class="r" style="left:306.0px;top:777.1px;width:1346.5px;height:1.9px;background:#dfe6ec;"></div>
<div class="t" style="left:305.0px;width:208.20000000000005px;text-align:center;top:744.06px;height:25.48px;line-height:25.48px;font-size:18.2px;color:#606266;font-weight:normal;">0100000005</div>
<div class="t" style="left:513.2px;width:448.29999999999995px;text-align:center;top:744.06px;height:25.48px;line-height:25.48px;font-size:18.2px;color:#606266;font-weight:normal;">88888</div>
<div class="t" style="left:1287.5px;width:121.70000000000005px;text-align:center;top:744.06px;height:25.48px;line-height:25.48px;font-size:18.2px;color:#606266;font-weight:normal;">台</div>
<div class="t" style="left:1492.5px;top:745.88px;height:21.84px;line-height:21.84px;font-size:15.6px;color:#1890ff;font-weight:normal;">选择</div>
<div class="t" style="left:1540.0px;top:745.88px;height:21.84px;line-height:21.84px;font-size:15.6px;color:#67c23a;font-weight:normal;">查看</div>
<div class="r" style="left:306.0px;top:820.0px;width:1346.5px;height:1.9px;background:#dfe6ec;"></div>
<div class="t" style="left:305.0px;width:208.20000000000005px;text-align:center;top:786.96px;height:25.48px;line-height:25.48px;font-size:18.2px;color:#606266;font-weight:normal;">0101000003</div>
<div class="t" style="left:513.2px;width:448.29999999999995px;text-align:center;top:786.96px;height:25.48px;line-height:25.48px;font-size:18.2px;color:#606266;font-weight:normal;">5</div>
<div class="t" style="left:1287.5px;width:121.70000000000005px;text-align:center;top:786.96px;height:25.48px;line-height:25.48px;font-size:18.2px;color:#606266;font-weight:normal;">千克</div>
<div class="t" style="left:1492.5px;top:788.78px;height:21.84px;line-height:21.84px;font-size:15.6px;color:#1890ff;font-weight:normal;">选择</div>
<div class="t" style="left:1540.0px;top:788.78px;height:21.84px;line-height:21.84px;font-size:15.6px;color:#67c23a;font-weight:normal;">查看</div>
<div class="r" style="left:306.0px;top:862.9px;width:1346.5px;height:1.9px;background:#dfe6ec;"></div>
<div class="t" style="left:305.0px;width:208.20000000000005px;text-align:center;top:829.86px;height:25.48px;line-height:25.48px;font-size:18.2px;color:#606266;font-weight:normal;">0100000006</div>
<div class="t" style="left:513.2px;width:448.29999999999995px;text-align:center;top:829.86px;height:25.48px;line-height:25.48px;font-size:18.2px;color:#606266;font-weight:normal;">测试机器</div>
<div class="t" style="left:1287.5px;width:121.70000000000005px;text-align:center;top:829.86px;height:25.48px;line-height:25.48px;font-size:18.2px;color:#606266;font-weight:normal;">套</div>
<div class="t" style="left:1492.5px;top:831.68px;height:21.84px;line-height:21.84px;font-size:15.6px;color:#1890ff;font-weight:normal;">选择</div>
<div class="t" style="left:1540.0px;top:831.68px;height:21.84px;line-height:21.84px;font-size:15.6px;color:#67c23a;font-weight:normal;">查看</div>
<div class="r" style="left:306.0px;top:905.8px;width:1346.5px;height:1.9px;background:#dfe6ec;"></div>
<div class="t" style="left:305.0px;width:208.20000000000005px;text-align:center;top:872.76px;height:25.48px;line-height:25.48px;font-size:18.2px;color:#606266;font-weight:normal;">0105000003</div>
<div class="t" style="left:513.2px;width:448.29999999999995px;text-align:center;top:872.76px;height:25.48px;line-height:25.48px;font-size:18.2px;color:#606266;font-weight:normal;">家庭机器人</div>
<div class="t" style="left:961.5px;width:326px;text-align:center;top:872.76px;height:25.48px;line-height:25.48px;font-size:18.2px;color:#606266;font-weight:normal;">150</div>
<div class="t" style="left:1287.5px;width:121.70000000000005px;text-align:center;top:872.76px;height:25.48px;line-height:25.48px;font-size:18.2px;color:#606266;font-weight:normal;">吨</div>
<div class="t" style="left:1492.5px;top:874.58px;height:21.84px;line-height:21.84px;font-size:15.6px;color:#1890ff;font-weight:normal;">选择</div>
<div class="t" style="left:1540.0px;top:874.58px;height:21.84px;line-height:21.84px;font-size:15.6px;color:#67c23a;font-weight:normal;">查看</div>
<div class="r" style="left:306.0px;top:948.7px;width:1346.5px;height:1.9px;background:#dfe6ec;"></div>
<div class="t" style="left:305.0px;width:208.20000000000005px;text-align:center;top:915.66px;height:25.48px;line-height:25.48px;font-size:18.2px;color:#606266;font-weight:normal;">0101000004</div>
<div class="t" style="left:513.2px;width:448.29999999999995px;text-align:center;top:915.66px;height:25.48px;line-height:25.48px;font-size:18.2px;color:#606266;font-weight:normal;">22</div>
<div class="t" style="left:1287.5px;width:121.70000000000005px;text-align:center;top:915.66px;height:25.48px;line-height:25.48px;font-size:18.2px;color:#606266;font-weight:normal;">台</div>
<div class="t" style="left:1492.5px;top:917.48px;height:21.84px;line-height:21.84px;font-size:15.6px;color:#1890ff;font-weight:normal;">选择</div>
<div class="t" style="left:1540.0px;top:917.48px;height:21.84px;line-height:21.84px;font-size:15.6px;color:#67c23a;font-weight:normal;">查看</div>
<div class="t" style="left:1431.0px;width:200px;text-align:center;top:184.75px;height:24.5px;line-height:24.5px;font-size:17.5px;color:#515a6e;font-weight:700;">操作</div>
</div>
<div class="r" style="left:599.7px;top:98.5px;width:1200.3px;height:565.0px;background:#fff;box-shadow:0 1.5px 5px rgba(0,0,0,.32);border-radius:3px;">
<svg class="r" style="left:1157.3px;top:30.5px" width="14" height="14" viewBox="0 0 14 14"><path d="M1 1 L13 13 M13 1 L1 13" stroke="#909399" stroke-width="1.3"/></svg>
<div class="t" style="left:-230.3px;width:400px;text-align:right;top:52.1px;height:24.5px;line-height:24.5px;font-size:17.5px;color:#606266;font-weight:normal;">分类信息</div>
<div class="r" style="left:186.8px;top:43.2px;width:986.9px;height:42.3px;background:#f5f7fa;border:2px solid #dfe3eb;border-radius:5px;box-sizing:border-box;"></div>
<div class="t" style="left:208.3px;top:52.1px;height:24.5px;line-height:24.5px;font-size:17.5px;color:#1890ff;font-weight:normal;">成品 / 纸杯机</div>
<svg class="r" style="left:1144.3px;top:60.5px" width="14" height="9" viewBox="0 0 14 9"><path d="M1 1 L7 7.5 L13 1" fill="none" stroke="#c0c4cc" stroke-width="1.3"/></svg>
<div class="t" style="left:-230.3px;width:400px;text-align:right;top:109.0px;height:24.5px;line-height:24.5px;font-size:17.5px;color:#606266;font-weight:normal;">物料编码</div>
<div class="r" style="left:186.8px;top:100.0px;width:412.8px;height:42.5px;background:#f5f7fa;border:2px solid #dfe3eb;border-radius:5px;box-sizing:border-box;"></div>
<div class="t" style="left:208.3px;top:109.0px;height:24.5px;line-height:24.5px;font-size:17.5px;color:#303133;font-weight:normal;">0101000001</div>
<div class="t" style="left:343.8px;width:400px;text-align:right;top:109.3px;height:24.5px;line-height:24.5px;font-size:17.5px;color:#606266;font-weight:normal;">更新时间</div>
<div class="r" style="left:761.3px;top:100.2px;width:412.4px;height:42.7px;background:#f5f7fa;border:2px solid #dfe3eb;border-radius:5px;box-sizing:border-box;"></div>
<div class="t" style="left:782.8px;top:109.3px;height:24.5px;line-height:24.5px;font-size:17.5px;color:#303133;font-weight:normal;">2026-01-14 14:48:46</div>
<div class="t" style="left:-230.3px;width:400px;text-align:right;top:164.7px;height:24.5px;line-height:24.5px;font-size:17.5px;color:#606266;font-weight:normal;">物料名称</div>
<div class="r" style="left:186.8px;top:156.2px;width:412.8px;height:41.5px;background:#f5f7fa;border:2px solid #dfe3eb;border-radius:5px;box-sizing:border-box;"></div>
<div class="t" style="left:208.3px;top:164.7px;height:24.5px;line-height:24.5px;font-size:17.5px;color:#303133;font-weight:normal;">118S ZY型纸杯机</div>
<div class="t" style="left:658.3px;width:400px;text-align:right;top:165.25px;height:24.5px;line-height:24.5px;font-size:17.5px;color:#606266;font-weight:normal;">允许负库存</div>
<div class="r" style="left:1074.3px;top:166.5px;width:79.8px;height:25.0px;background:#e9eaef;border-radius:13px;"></div>
<div class="r" style="left:1078.3px;top:170.2px;width:20.6px;height:20.4px;background:#fff;border-radius:50%;"></div>
<div class="t" style="left:-230.3px;width:400px;text-align:right;top:220.9px;height:24.5px;line-height:24.5px;font-size:17.5px;color:#606266;font-weight:normal;">主计量</div>
<div class="r" style="left:186.8px;top:212.1px;width:250.8px;height:42.1px;background:#f5f7fa;border:2px solid #dfe3eb;border-radius:5px;box-sizing:border-box;"></div>
<div class="t" style="left:208.3px;top:220.9px;height:24.5px;line-height:24.5px;font-size:17.5px;color:#303133;font-weight:normal;">台</div>
<svg class="r" style="left:407.29999999999995px;top:229.5px" width="14" height="9" viewBox="0 0 14 9"><path d="M1 1 L7 7.5 L13 1" fill="none" stroke="#c0c4cc" stroke-width="1.3"/></svg>
<div class="t" style="left:-230.3px;width:400px;text-align:right;top:277.05px;height:24.5px;line-height:24.5px;font-size:17.5px;color:#606266;font-weight:normal;">型号规格</div>
<div class="r" style="left:186.8px;top:268.1px;width:412.8px;height:42.4px;background:#f5f7fa;border:2px solid #dfe3eb;border-radius:5px;box-sizing:border-box;"></div>
<div class="t" style="left:208.3px;top:277.05px;height:24.5px;line-height:24.5px;font-size:17.5px;color:#303133;font-weight:normal;">ZY型</div>
<div class="t" style="left:-230.3px;width:400px;text-align:right;top:334.65px;height:24.5px;line-height:24.5px;font-size:17.5px;color:#606266;font-weight:normal;">规格描述</div>
<div class="r" style="left:186.8px;top:325.9px;width:412.8px;height:42.0px;background:#f5f7fa;border:2px solid #dfe3eb;border-radius:5px;box-sizing:border-box;"></div>
<div class="r" style="left:26.3px;top:378.5px;width:1127.4px;height:146.0px;background:#fff;border-radius:8px;box-shadow:0 2px 12px rgba(0,0,0,.1);"></div>
<div class="t" style="left:-169.9px;width:400px;text-align:right;top:411.35px;height:24.5px;line-height:24.5px;font-size:17.5px;color:#606266;font-weight:normal;">当前库存数量</div>
<div class="r" style="left:246.9px;top:402.2px;width:342.8px;height:42.8px;background:#f5f7fa;border:2px solid #dfe3eb;border-radius:5px;box-sizing:border-box;"></div>
<div class="t" style="left:268.4px;top:411.35px;height:24.5px;line-height:24.5px;font-size:17.5px;color:#1890ff;font-weight:normal;">2137.0000</div>
<div class="t" style="left:-169.9px;width:400px;text-align:right;top:467.7px;height:24.5px;line-height:24.5px;font-size:17.5px;color:#606266;font-weight:normal;">锁定库存数量</div>
<div class="r" style="left:246.9px;top:459.2px;width:342.8px;height:41.5px;background:#f5f7fa;border:2px solid #dfe3eb;border-radius:5px;box-sizing:border-box;"></div>
<div class="t" style="left:268.4px;top:467.7px;height:24.5px;line-height:24.5px;font-size:17.5px;color:#303133;font-weight:normal;">150012.0000</div>
<div class="t" style="left:374.3px;width:400px;text-align:right;top:411.35px;height:24.5px;line-height:24.5px;font-size:17.5px;color:#606266;font-weight:normal;">实际可用数量</div>
<div class="r" style="left:791.1px;top:402.2px;width:341.2px;height:42.8px;background:#f5f7fa;border:2px solid #dfe3eb;border-radius:5px;box-sizing:border-box;"></div>
<div class="t" style="left:812.6px;top:411.35px;height:24.5px;line-height:24.5px;font-size:17.5px;color:#13ce66;font-weight:normal;">-147875.0000</div>
<div class="t" style="left:374.3px;width:400px;text-align:right;top:467.7px;height:24.5px;line-height:24.5px;font-size:17.5px;color:#606266;font-weight:normal;">在途库存数量</div>
<div class="r" style="left:791.1px;top:459.2px;width:341.2px;height:41.5px;background:#f5f7fa;border:2px solid #dfe3eb;border-radius:5px;box-sizing:border-box;"></div>
<div class="t" style="left:812.6px;top:467.7px;height:24.5px;line-height:24.5px;font-size:17.5px;color:#303133;font-weight:normal;">0.0000</div>
</div>
</body></html>
